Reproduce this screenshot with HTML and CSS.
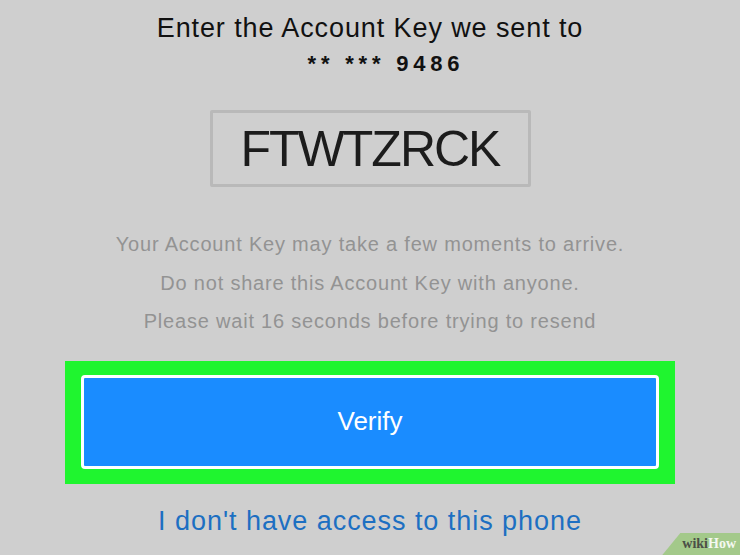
FILE: index.html
```html
<!DOCTYPE html>
<html lang="en">
<head>
  <meta charset="UTF-8">
  <meta name="viewport" content="width=device-width, initial-scale=1.0">
  <title>Account Key</title>
  <link rel="stylesheet" href="styles.css">
</head>
<body>
  <div class="screen">
    <h1 class="prompt">Enter the Account Key we sent to</h1>
    <div class="phone">** *** 9486</div>

    <div class="key-box">FTWTZRCK</div>

    <div class="notes">
      <p>Your Account Key may take a few moments to arrive.</p>
      <p>Do not share this Account Key with anyone.</p>
      <p>Please wait 16 seconds before trying to resend</p>
    </div>

    <div class="highlight">
      <button class="verify">Verify</button>
    </div>

    <a class="no-access" href="#">I don't have access to this phone</a>
  </div>

  <div class="badge"><span class="wiki">wiki</span><span class="how">How</span></div>
</body>
</html>
```

FILE: styles.css
```css
body {
  margin: 0;
  width: 740px;
  height: 555px;
  overflow: hidden;
  background-color: #cfcfcf;
  font-family: "Liberation Sans", Arial, sans-serif;
  position: relative;
}
.screen {
  display: flex;
  flex-direction: column;
  align-items: center;
  padding-top: 11px;
}
.prompt {
  margin: 0;
  font-size: 27px;
  font-weight: normal;
  letter-spacing: 0.9px;
  line-height: 34px;
  color: #111;
}
.phone {
  margin-top: 6px;
  font-size: 22px;
  font-weight: bold;
  letter-spacing: 4.8px;
  line-height: 26px;
  color: #111;
  padding-left: 32px;
}
.key-box {
  margin-top: 33px;
  width: 315px;
  height: 71px;
  border: 3px solid #b9b9b9;
  border-radius: 2px;
  display: flex;
  align-items: center;
  justify-content: center;
  font-size: 50px;
  color: #1c1c1c;
  letter-spacing: -2px;
}
.notes {
  margin-top: 38px;
  text-align: center;
  color: #939393;
  font-size: 20px;
  letter-spacing: 0.8px;
}
.notes p {
  margin: 0;
  line-height: 38.5px;
}
.highlight {
  margin-top: 20px;
  width: 578px;
  padding: 14px 16px 15px;
  background: #1ff52f;
}
.verify {
  display: block;
  width: 100%;
  height: 94px;
  border: 3px solid #fff;
  border-radius: 4px;
  background: #1a8cff;
  color: #fff;
  font-family: "Liberation Sans", Arial, sans-serif;
  font-size: 26px;
  padding: 0;
}
.no-access {
  margin-top: 22px;
  font-size: 27px;
  letter-spacing: 0.95px;
  color: #1d6fc2;
  text-decoration: none;
}
.badge {
  position: absolute;
  right: 0;
  bottom: 0;
  height: 22px;
  padding: 0 4px 0 20px;
  background: #a3c98a;
  clip-path: polygon(18px 0, 100% 0, 100% 100%, 0 100%);
  font-family: "Liberation Serif", serif;
  font-weight: bold;
  font-size: 14px;
  line-height: 22px;
}
.badge .wiki {
  color: #4b4f47;
}
.badge .how {
  color: #f4f8f0;
}
```
